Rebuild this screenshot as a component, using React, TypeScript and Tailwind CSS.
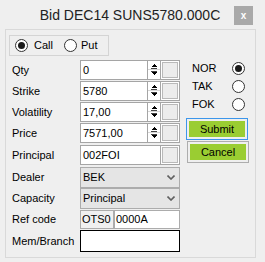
import React from "react";

function Radio({ checked }: { checked?: boolean }) {
  return (
    <div className="w-[13px] h-[13px] rounded-full border border-[#333333] bg-white flex items-center justify-center shrink-0">
      {checked && <div className="w-[7px] h-[7px] rounded-full bg-[#1a1a1a]" />}
    </div>
  );
}

function Spinner() {
  return (
    <div className="w-[14px] border-x border-[#a5a5a5] bg-white shrink-0">
      <svg width="12" height="18" viewBox="0 0 12 18" shapeRendering="crispEdges">
        <polygon points="3,6 9,6 6,3" fill="#000" />
        <rect x="3" y="7" width="6" height="1" fill="#444" />
        <rect x="0" y="8" width="12" height="1" fill="#d6d6d6" />
        <rect x="3" y="10" width="6" height="1" fill="#444" />
        <polygon points="3,11 9,11 6,14" fill="#000" />
      </svg>
    </div>
  );
}

function Square() {
  return <div className="w-[16px] m-px border border-[#b9b9b9] bg-[#ececec] shrink-0" />;
}

function Chevron() {
  return (
    <svg width="8" height="5" viewBox="0 0 8 5">
      <path d="M0.5 0.5 L4 4 L7.5 0.5" fill="none" stroke="#606060" strokeWidth="1.6" />
    </svg>
  );
}

function Row({
  label,
  mt,
  children,
}: {
  label: string;
  mt: string;
  children: React.ReactNode;
}) {
  return (
    <div className={`flex items-center ${mt}`}>
      <div className="w-[68px] shrink-0">{label}</div>
      {children}
    </div>
  );
}

function SpinInput({ value }: { value: string }) {
  return (
    <div className="flex h-[20px] w-[100px] border border-[#a5a5a5] bg-white">
      <div className="flex-1 flex items-center pl-[2px]">{value}</div>
      <Spinner />
      <Square />
    </div>
  );
}

export default function App() {
  return (
    <div className="w-[265px] h-[262px] bg-[#efefef] overflow-hidden text-[11px] text-black font-['Liberation_Sans',Arial,sans-serif] leading-none">
      <div className="h-[29px] relative flex items-center justify-center pr-[5px]">
        <span className="text-[14px] text-[#222222]">Bid DEC14 SUNS5780.000C</span>
        <div className="absolute left-[234px] top-[6px] w-[19px] h-[19px] bg-[#a9a9a9] flex items-center justify-center text-white text-[10px] font-bold">
          x
        </div>
      </div>
      <div className="ml-[5px] w-[251px] h-[229px] border border-[#d9d9d9]">
        <div className="ml-[3px] mt-[5px] w-[100px] h-[21px] border border-[#d4d4d4] flex items-center pl-[5px]">
          <Radio checked />
          <span className="ml-[6px]">Call</span>
          <div className="ml-[11px]">
            <Radio />
          </div>
          <span className="ml-[4px]">Put</span>
        </div>
        <div className="flex mt-[4px]">
          <div className="pl-[6px] flex flex-col">
            <Row label="Qty" mt="mt-0">
              <SpinInput value="0" />
            </Row>
            <Row label="Strike" mt="mt-[1px]">
              <SpinInput value="5780" />
            </Row>
            <Row label="Volatility" mt="mt-[1px]">
              <SpinInput value="17,00" />
            </Row>
            <Row label="Price" mt="mt-[1px]">
              <SpinInput value="7571,00" />
            </Row>
            <Row label="Principal" mt="mt-[2px]">
              <div className="flex h-[20px] w-[100px] border border-[#a5a5a5] bg-white">
                <div className="flex-1 flex items-center pl-[2px] border-r border-[#a5a5a5]">002FOI</div>
                <Square />
              </div>
            </Row>
            <Row label="Dealer" mt="mt-[2px]">
              <div className="flex h-[21px] w-[100px] border border-[#acacac] bg-[#e5e5e5] items-center justify-between pl-[2px] pr-[4px]">
                <span>BEK</span>
                <Chevron />
              </div>
            </Row>
            <Row label="Capacity" mt="mt-0">
              <div className="flex h-[21px] w-[100px] border border-[#acacac] bg-[#e5e5e5] items-center justify-between pl-[2px] pr-[4px]">
                <span>Principal</span>
                <Chevron />
              </div>
            </Row>
            <Row label="Ref code" mt="mt-[1px]">
              <div className="flex h-[19px] w-[100px]">
                <div className="w-[34px] border border-[#acacac] bg-[#f0f0f0] flex items-center pl-[1px]">OTS0</div>
                <div className="w-[66px] border border-[#acacac] bg-white flex items-center pl-[1px]">0000A</div>
              </div>
            </Row>
            <Row label="Mem/Branch" mt="mt-[1px]">
              <div className="h-[22px] w-[100px] border border-black bg-white" />
            </Row>
          </div>
          <div className="flex flex-col pl-[12px]">
            <div className="mt-[2px] flex flex-col gap-[5px]">
              {[
                ["NOR", true],
                ["TAK", false],
                ["FOK", false],
              ].map(([l, c]) => (
                <div key={l as string} className="flex items-center h-[13px]">
                  <span className="w-[40px]">{l as string}</span>
                  <Radio checked={c as boolean} />
                </div>
              ))}
            </div>
            <div className="mt-[7px] -ml-[6px] w-[62px] h-[22px] border border-[#3c96eb] p-[2px]">
              <div className="w-full h-full bg-[#9acd32] flex items-center justify-center">Submit</div>
            </div>
            <div className="mt-[1px] -ml-[5px] w-[62px] h-[22px] border border-[#adadad] p-[2px]">
              <div className="w-full h-full bg-[#9acd32] flex items-center justify-center">Cancel</div>
            </div>
          </div>
        </div>
      </div>
    </div>
  );
}
